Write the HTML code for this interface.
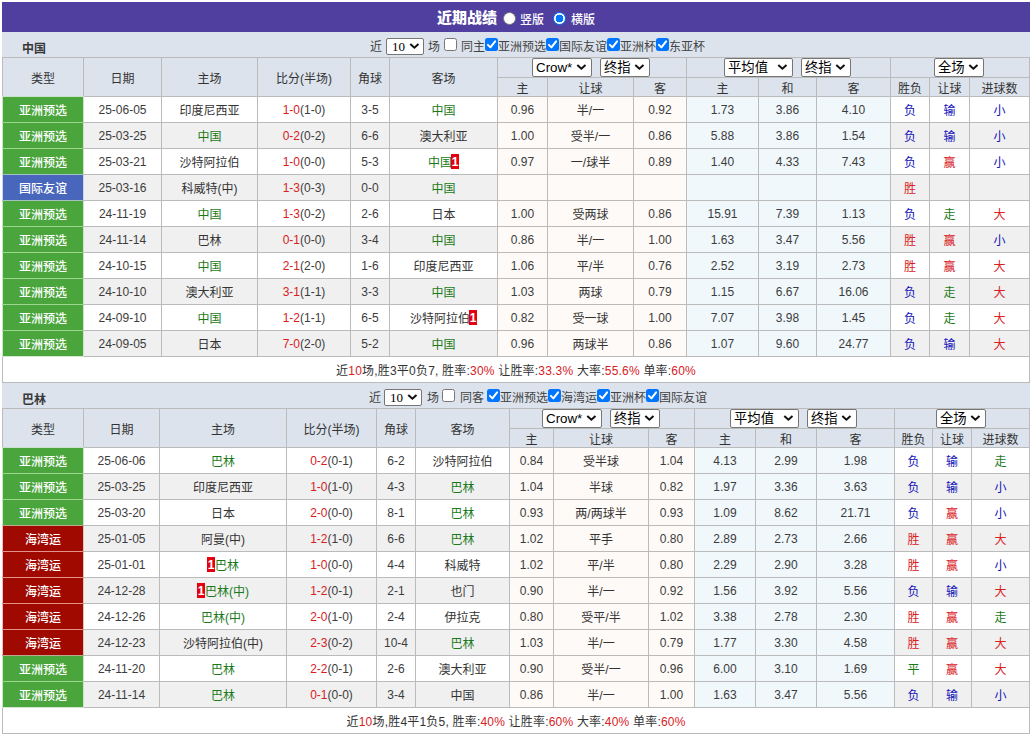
<!DOCTYPE html>
<html lang="zh-CN"><head><meta charset="utf-8"><title>近期战绩</title>
<style>
html,body{margin:0;padding:0;background:#fff;}
body{width:1032px;height:736px;overflow:hidden;font-family:"Liberation Sans","Noto Sans CJK SC",sans-serif;font-size:12px;color:#333;}
.wrap{position:absolute;left:2px;top:2px;width:1028px;}
.hd{position:relative;height:30px;background:#503f9e;color:#fff;}
.hd .ttl{position:absolute;left:435px;top:6px;font:900 15px/20px "Liberation Sans","Noto Sans CJK SC",sans-serif;}
.hd .rd{position:absolute;top:10px;width:13px;height:13px;box-sizing:border-box;border-radius:50%;background:#fff;border:1px solid #767676;}
.hd .rd.on{border:1.5px solid #0075ff;background:radial-gradient(circle at center,#0075ff 0,#0075ff 3.6px,#fff 4.1px);}
.hd .rl{position:absolute;top:10px;font-size:12px;line-height:16px;font-weight:500;}
.bar{position:relative;height:25px;background:#dce3ed;}
.bar .tn{position:absolute;left:20px;top:9px;font-weight:bold;font-size:12px;line-height:16px;color:#383838;}
.ft{position:absolute;margin-top:2px;font:12px/16px "Liberation Sans","Noto Sans CJK SC",sans-serif;color:#444;white-space:nowrap;}
.cb{position:absolute;width:13px;height:13px;box-sizing:border-box;border:1px solid #767676;border-radius:2.5px;background:#fff;}
.cb.on{border:none;background:#0075ff;}
.cb svg{display:block;}
.sel{display:inline-block;position:relative;box-sizing:border-box;height:18px;border:1px solid #767676;border-radius:2px;background:#fff;color:#000;font-size:13.33px;line-height:16px;padding:1px 0 0 3px;text-align:left;vertical-align:top;white-space:nowrap;font-weight:normal;overflow:hidden;}
.sel svg{position:absolute;right:4px;top:4px;display:block;}
.sel.s10{position:absolute;width:38px;height:17px;line-height:14px;font:13px/14px "Liberation Serif",serif;padding:1px 0 0 5px;}
table.t{border-collapse:collapse;table-layout:fixed;width:1027px;margin:0;}
table.t td,table.t th{border:1px solid #bbb;padding:0;text-align:center;font-weight:normal;font-size:12px;overflow:hidden;white-space:nowrap;}
table.t th{background:#dce3ed;color:#333;}
tr.h1{height:20px;} tr.h2{height:19px;}
tr.h1 th{height:19px;line-height:19px;}
tr.h1 th[rowspan]{padding-top:4px;}
tr.h2 th{height:14px;line-height:14px;padding-top:4px;}
tr.a td,tr.b td,tr.sum td{height:21px;line-height:21px;padding-top:4px;}
tr.a td.n,tr.b td.n{height:23px;line-height:23px;padding-top:2px;}
tr.a td{background:#fff;} tr.b td{background:#f0f0f0;}
tr.a td.o,tr.b td.o{background:#fefaf7;}
tr.a td.e,tr.b td.e{background:#f0f8fc;}
tr.sum td{background:#fff;}
table.t td.ty{color:#fff;font-weight:500;border-style:double;}
tr.a td.tg,tr.b td.tg{background:#4aa63c;border-color:#cde5c8;}
tr.a td.tb,tr.b td.tb{background:#4766bc;border-color:#cdd5ea;}
tr.a td.tr,tr.b td.tr{background:#a00900;border-color:#e7c1bf;}
.gt{color:#1a7a1a;}
.cr{color:#d8201e;} .cg{color:#1a7a1a;}
.kb{color:#1010b8;}
.rc{display:inline-block;background:#e6000f;color:#fff;font-size:12px;font-weight:bold;line-height:17px;height:15px;width:8px;text-align:center;vertical-align:1px;margin-left:-1px;}
.rc.rb{margin-left:0;}
tr.sum td{letter-spacing:0.2px;}
th .sel{height:19px;}
tr.h1 th[colspan]{padding-right:2px;}
.sel.s10 svg{right:3px;top:3px;}
tr.a td.n,tr.b td.n{color:#3c3c3c;}

</style></head>
<body>
<div class="wrap">
<div class="hd"><span class="ttl">近期战绩</span><span class="rd" style="left:501px"></span><span class="rl" style="left:518px">竖版</span><span class="rd on" style="left:551px"></span><span class="rl" style="left:569px">横版</span></div>
<div class="bar"><span class="tn">中国</span><span class="ft" style="left:368px;top:5px">近</span><span class="sel s10" style="left:384px;top:6px">10<svg width="12" height="8" viewBox="0 0 12 8"><path d="M2.3 2 L6.4 5.7 L10.5 2" fill="none" stroke="#111" stroke-width="2"/></svg></span><span class="ft" style="left:426px;top:5px">场</span><span class="cb" style="left:442px;top:6px"></span><span class="ft" style="left:459px;top:5px">同主</span><span class="cb on" style="left:483px;top:6px"><svg viewBox="0 0 13 13" width="13" height="13"><path d="M2.9 6.9 L5.4 9.4 L10.1 3.3" fill="none" stroke="#fff" stroke-width="2" stroke-linecap="round" stroke-linejoin="round"/></svg></span><span class="ft" style="left:496px;top:5px">亚洲预选</span><span class="cb on" style="left:544px;top:6px"><svg viewBox="0 0 13 13" width="13" height="13"><path d="M2.9 6.9 L5.4 9.4 L10.1 3.3" fill="none" stroke="#fff" stroke-width="2" stroke-linecap="round" stroke-linejoin="round"/></svg></span><span class="ft" style="left:557px;top:5px">国际友谊</span><span class="cb on" style="left:605px;top:6px"><svg viewBox="0 0 13 13" width="13" height="13"><path d="M2.9 6.9 L5.4 9.4 L10.1 3.3" fill="none" stroke="#fff" stroke-width="2" stroke-linecap="round" stroke-linejoin="round"/></svg></span><span class="ft" style="left:618px;top:5px">亚洲杯</span><span class="cb on" style="left:654px;top:6px"><svg viewBox="0 0 13 13" width="13" height="13"><path d="M2.9 6.9 L5.4 9.4 L10.1 3.3" fill="none" stroke="#fff" stroke-width="2" stroke-linecap="round" stroke-linejoin="round"/></svg></span><span class="ft" style="left:667px;top:5px">东亚杯</span></div>
<table class="t"><col style="width:81px"><col style="width:78px"><col style="width:96px"><col style="width:93px"><col style="width:39px"><col style="width:108px"><col style="width:50px"><col style="width:86px"><col style="width:53px"><col style="width:72px"><col style="width:58px"><col style="width:74px"><col style="width:39px"><col style="width:40px"><col style="width:60px">
<tr class="h1"><th rowspan="2">类型</th><th rowspan="2">日期</th><th rowspan="2">主场</th><th rowspan="2">比分(半场)</th><th rowspan="2">角球</th><th rowspan="2">客场</th><th colspan="3"><span class="sel" style="width:60px">Crow*<svg width="12" height="8" viewBox="0 0 12 8"><path d="M2.3 2 L6.4 5.7 L10.5 2" fill="none" stroke="#111" stroke-width="2"/></svg></span><span class="sel" style="width:50px;margin-left:8px">终指<svg width="12" height="8" viewBox="0 0 12 8"><path d="M2.3 2 L6.4 5.7 L10.5 2" fill="none" stroke="#111" stroke-width="2"/></svg></span></th><th colspan="3"><span class="sel" style="width:69px">平均值<svg width="12" height="8" viewBox="0 0 12 8"><path d="M2.3 2 L6.4 5.7 L10.5 2" fill="none" stroke="#111" stroke-width="2"/></svg></span><span class="sel" style="width:50px;margin-left:8px">终指<svg width="12" height="8" viewBox="0 0 12 8"><path d="M2.3 2 L6.4 5.7 L10.5 2" fill="none" stroke="#111" stroke-width="2"/></svg></span></th><th colspan="3"><span class="sel" style="width:50px">全场<svg width="12" height="8" viewBox="0 0 12 8"><path d="M2.3 2 L6.4 5.7 L10.5 2" fill="none" stroke="#111" stroke-width="2"/></svg></span></th></tr>
<tr class="h2"><th>主</th><th>让球</th><th>客</th><th>主</th><th>和</th><th>客</th><th>胜负</th><th>让球</th><th>进球数</th></tr>
<tr class="a"><td class="ty tg" style="border-top-color:#c9e2ca;border-bottom-color:#9bd58f">亚洲预选</td><td class="n">25-06-05</td><td>印度尼西亚</td><td class="n"><span class="cr">1-0</span>(1-0)</td><td class="n">3-5</td><td class="gt">中国</td><td class="o n">0.96</td><td class="o">半/一</td><td class="o n">0.92</td><td class="e n">1.73</td><td class="e n">3.86</td><td class="e n">4.10</td><td class="rs kb">负</td><td class="rs kb">输</td><td class="rs kb">小</td></tr>
<tr class="b"><td class="ty tg" style="border-top-color:#9bd58f;border-bottom-color:#9bd58f">亚洲预选</td><td class="n">25-03-25</td><td class="gt">中国</td><td class="n"><span class="cr">0-2</span>(0-2)</td><td class="n">6-6</td><td>澳大利亚</td><td class="o n">1.00</td><td class="o">受半/一</td><td class="o n">0.86</td><td class="e n">5.88</td><td class="e n">3.86</td><td class="e n">1.54</td><td class="rs kb">负</td><td class="rs kb">输</td><td class="rs kb">小</td></tr>
<tr class="a"><td class="ty tg" style="border-top-color:#9bd58f;border-bottom-color:#a4c2be">亚洲预选</td><td class="n">25-03-21</td><td>沙特阿拉伯</td><td class="n"><span class="cr">1-0</span>(0-0)</td><td class="n">5-3</td><td class="gt">中国<span class="rc">1</span></td><td class="o n">0.97</td><td class="o">一/球半</td><td class="o n">0.89</td><td class="e n">1.40</td><td class="e n">4.33</td><td class="e n">7.43</td><td class="rs kb">负</td><td class="rs cr">赢</td><td class="rs kb">小</td></tr>
<tr class="b"><td class="ty tb" style="border-top-color:#a4c2be;border-bottom-color:#a4c2be">国际友谊</td><td class="n">25-03-16</td><td>科威特(中)</td><td class="n"><span class="cr">1-3</span>(0-3)</td><td class="n">0-0</td><td class="gt">中国</td><td class="o n"></td><td class="o"></td><td class="o n"></td><td class="e n"></td><td class="e n"></td><td class="e n"></td><td class="rs cr">胜</td><td class="rs"></td><td class="rs"></td></tr>
<tr class="a"><td class="ty tg" style="border-top-color:#a4c2be;border-bottom-color:#9bd58f">亚洲预选</td><td class="n">24-11-19</td><td class="gt">中国</td><td class="n"><span class="cr">1-3</span>(0-2)</td><td class="n">2-6</td><td>日本</td><td class="o n">1.00</td><td class="o">受两球</td><td class="o n">0.86</td><td class="e n">15.91</td><td class="e n">7.39</td><td class="e n">1.13</td><td class="rs kb">负</td><td class="rs cg">走</td><td class="rs cr">大</td></tr>
<tr class="b"><td class="ty tg" style="border-top-color:#9bd58f;border-bottom-color:#9bd58f">亚洲预选</td><td class="n">24-11-14</td><td>巴林</td><td class="n"><span class="cr">0-1</span>(0-0)</td><td class="n">3-4</td><td class="gt">中国</td><td class="o n">0.86</td><td class="o">半/一</td><td class="o n">1.00</td><td class="e n">1.63</td><td class="e n">3.47</td><td class="e n">5.56</td><td class="rs cr">胜</td><td class="rs cr">赢</td><td class="rs kb">小</td></tr>
<tr class="a"><td class="ty tg" style="border-top-color:#9bd58f;border-bottom-color:#9bd58f">亚洲预选</td><td class="n">24-10-15</td><td class="gt">中国</td><td class="n"><span class="cr">2-1</span>(2-0)</td><td class="n">1-6</td><td>印度尼西亚</td><td class="o n">1.06</td><td class="o">平/半</td><td class="o n">0.76</td><td class="e n">2.52</td><td class="e n">3.19</td><td class="e n">2.73</td><td class="rs cr">胜</td><td class="rs cr">赢</td><td class="rs cr">大</td></tr>
<tr class="b"><td class="ty tg" style="border-top-color:#9bd58f;border-bottom-color:#9bd58f">亚洲预选</td><td class="n">24-10-10</td><td>澳大利亚</td><td class="n"><span class="cr">3-1</span>(1-1)</td><td class="n">3-3</td><td class="gt">中国</td><td class="o n">1.03</td><td class="o">两球</td><td class="o n">0.79</td><td class="e n">1.15</td><td class="e n">6.67</td><td class="e n">16.06</td><td class="rs kb">负</td><td class="rs cg">走</td><td class="rs cr">大</td></tr>
<tr class="a"><td class="ty tg" style="border-top-color:#9bd58f;border-bottom-color:#9bd58f">亚洲预选</td><td class="n">24-09-10</td><td class="gt">中国</td><td class="n"><span class="cr">1-2</span>(1-1)</td><td class="n">6-5</td><td>沙特阿拉伯<span class="rc">1</span></td><td class="o n">0.82</td><td class="o">受一球</td><td class="o n">1.00</td><td class="e n">7.07</td><td class="e n">3.98</td><td class="e n">1.45</td><td class="rs kb">负</td><td class="rs cg">走</td><td class="rs cr">大</td></tr>
<tr class="b"><td class="ty tg" style="border-top-color:#9bd58f;border-bottom-color:#d2e9ce">亚洲预选</td><td class="n">24-09-05</td><td>日本</td><td class="n"><span class="cr">7-0</span>(2-0)</td><td class="n">5-2</td><td class="gt">中国</td><td class="o n">0.96</td><td class="o">两球半</td><td class="o n">0.86</td><td class="e n">1.07</td><td class="e n">9.60</td><td class="e n">24.77</td><td class="rs kb">负</td><td class="rs kb">输</td><td class="rs cr">大</td></tr>
<tr class="sum"><td colspan="15">近<span class="cr">10</span>场,胜3平0负7, 胜率:<span class="cr">30%</span> 让胜率:<span class="cr">33.3%</span> 大率:<span class="cr">55.6%</span> 单率:<span class="cr">60%</span></td></tr>
</table>
<div class="bar"><span class="tn">巴林</span><span class="ft" style="left:367px;top:5px">近</span><span class="sel s10" style="left:382px;top:6px">10<svg width="12" height="8" viewBox="0 0 12 8"><path d="M2.3 2 L6.4 5.7 L10.5 2" fill="none" stroke="#111" stroke-width="2"/></svg></span><span class="ft" style="left:425px;top:5px">场</span><span class="cb" style="left:440px;top:6px"></span><span class="ft" style="left:458px;top:5px">同客</span><span class="cb on" style="left:485px;top:6px"><svg viewBox="0 0 13 13" width="13" height="13"><path d="M2.9 6.9 L5.4 9.4 L10.1 3.3" fill="none" stroke="#fff" stroke-width="2" stroke-linecap="round" stroke-linejoin="round"/></svg></span><span class="ft" style="left:498px;top:5px">亚洲预选</span><span class="cb on" style="left:546px;top:6px"><svg viewBox="0 0 13 13" width="13" height="13"><path d="M2.9 6.9 L5.4 9.4 L10.1 3.3" fill="none" stroke="#fff" stroke-width="2" stroke-linecap="round" stroke-linejoin="round"/></svg></span><span class="ft" style="left:559px;top:5px">海湾运</span><span class="cb on" style="left:595px;top:6px"><svg viewBox="0 0 13 13" width="13" height="13"><path d="M2.9 6.9 L5.4 9.4 L10.1 3.3" fill="none" stroke="#fff" stroke-width="2" stroke-linecap="round" stroke-linejoin="round"/></svg></span><span class="ft" style="left:608px;top:5px">亚洲杯</span><span class="cb on" style="left:644px;top:6px"><svg viewBox="0 0 13 13" width="13" height="13"><path d="M2.9 6.9 L5.4 9.4 L10.1 3.3" fill="none" stroke="#fff" stroke-width="2" stroke-linecap="round" stroke-linejoin="round"/></svg></span><span class="ft" style="left:657px;top:5px">国际友谊</span></div>
<table class="t"><col style="width:81px"><col style="width:76px"><col style="width:127px"><col style="width:90px"><col style="width:39px"><col style="width:94px"><col style="width:44px"><col style="width:95px"><col style="width:46px"><col style="width:61px"><col style="width:61px"><col style="width:78px"><col style="width:38px"><col style="width:39px"><col style="width:58px">
<tr class="h1"><th rowspan="2">类型</th><th rowspan="2">日期</th><th rowspan="2">主场</th><th rowspan="2">比分(半场)</th><th rowspan="2">角球</th><th rowspan="2">客场</th><th colspan="3"><span class="sel" style="width:60px">Crow*<svg width="12" height="8" viewBox="0 0 12 8"><path d="M2.3 2 L6.4 5.7 L10.5 2" fill="none" stroke="#111" stroke-width="2"/></svg></span><span class="sel" style="width:50px;margin-left:8px">终指<svg width="12" height="8" viewBox="0 0 12 8"><path d="M2.3 2 L6.4 5.7 L10.5 2" fill="none" stroke="#111" stroke-width="2"/></svg></span></th><th colspan="3"><span class="sel" style="width:69px">平均值<svg width="12" height="8" viewBox="0 0 12 8"><path d="M2.3 2 L6.4 5.7 L10.5 2" fill="none" stroke="#111" stroke-width="2"/></svg></span><span class="sel" style="width:50px;margin-left:8px">终指<svg width="12" height="8" viewBox="0 0 12 8"><path d="M2.3 2 L6.4 5.7 L10.5 2" fill="none" stroke="#111" stroke-width="2"/></svg></span></th><th colspan="3"><span class="sel" style="width:50px">全场<svg width="12" height="8" viewBox="0 0 12 8"><path d="M2.3 2 L6.4 5.7 L10.5 2" fill="none" stroke="#111" stroke-width="2"/></svg></span></th></tr>
<tr class="h2"><th>主</th><th>让球</th><th>客</th><th>主</th><th>和</th><th>客</th><th>胜负</th><th>让球</th><th>进球数</th></tr>
<tr class="a"><td class="ty tg" style="border-top-color:#c9e2ca;border-bottom-color:#9bd58f">亚洲预选</td><td class="n">25-06-06</td><td class="gt">巴林</td><td class="n"><span class="cr">0-2</span>(0-1)</td><td class="n">6-2</td><td>沙特阿拉伯</td><td class="o n">0.84</td><td class="o">受半球</td><td class="o n">1.04</td><td class="e n">4.13</td><td class="e n">2.99</td><td class="e n">1.98</td><td class="rs kb">负</td><td class="rs kb">输</td><td class="rs cg">走</td></tr>
<tr class="b"><td class="ty tg" style="border-top-color:#9bd58f;border-bottom-color:#9bd58f">亚洲预选</td><td class="n">25-03-25</td><td>印度尼西亚</td><td class="n"><span class="cr">1-0</span>(1-0)</td><td class="n">4-3</td><td class="gt">巴林</td><td class="o n">1.04</td><td class="o">半球</td><td class="o n">0.82</td><td class="e n">1.97</td><td class="e n">3.36</td><td class="e n">3.63</td><td class="rs kb">负</td><td class="rs kb">输</td><td class="rs kb">小</td></tr>
<tr class="a"><td class="ty tg" style="border-top-color:#9bd58f;border-bottom-color:#baab8e">亚洲预选</td><td class="n">25-03-20</td><td>日本</td><td class="n"><span class="cr">2-0</span>(0-0)</td><td class="n">8-1</td><td class="gt">巴林</td><td class="o n">0.93</td><td class="o">两/两球半</td><td class="o n">0.93</td><td class="e n">1.09</td><td class="e n">8.62</td><td class="e n">21.71</td><td class="rs kb">负</td><td class="rs cr">赢</td><td class="rs kb">小</td></tr>
<tr class="b"><td class="ty tr" style="border-top-color:#baab8e;border-bottom-color:#e39389">海湾运</td><td class="n">25-01-05</td><td>阿曼(中)</td><td class="n"><span class="cr">1-2</span>(1-0)</td><td class="n">6-6</td><td class="gt">巴林</td><td class="o n">1.02</td><td class="o">平手</td><td class="o n">0.80</td><td class="e n">2.89</td><td class="e n">2.73</td><td class="e n">2.66</td><td class="rs cr">胜</td><td class="rs cr">赢</td><td class="rs cr">大</td></tr>
<tr class="a"><td class="ty tr" style="border-top-color:#e39389;border-bottom-color:#e39389">海湾运</td><td class="n">25-01-01</td><td class="gt"><span class="rc rb">1</span>巴林</td><td class="n"><span class="cr">1-0</span>(0-0)</td><td class="n">4-4</td><td>科威特</td><td class="o n">1.02</td><td class="o">平/半</td><td class="o n">0.80</td><td class="e n">2.29</td><td class="e n">2.90</td><td class="e n">3.28</td><td class="rs cr">胜</td><td class="rs cr">赢</td><td class="rs kb">小</td></tr>
<tr class="b"><td class="ty tr" style="border-top-color:#e39389;border-bottom-color:#e39389">海湾运</td><td class="n">24-12-28</td><td class="gt"><span class="rc rb">1</span>巴林(中)</td><td class="n"><span class="cr">1-2</span>(0-1)</td><td class="n">2-1</td><td>也门</td><td class="o n">0.90</td><td class="o">半/一</td><td class="o n">0.92</td><td class="e n">1.56</td><td class="e n">3.92</td><td class="e n">5.56</td><td class="rs kb">负</td><td class="rs kb">输</td><td class="rs cr">大</td></tr>
<tr class="a"><td class="ty tr" style="border-top-color:#e39389;border-bottom-color:#e39389">海湾运</td><td class="n">24-12-26</td><td class="gt">巴林(中)</td><td class="n"><span class="cr">2-0</span>(1-0)</td><td class="n">2-4</td><td>伊拉克</td><td class="o n">0.80</td><td class="o">受平/半</td><td class="o n">1.02</td><td class="e n">3.38</td><td class="e n">2.78</td><td class="e n">2.30</td><td class="rs cr">胜</td><td class="rs cr">赢</td><td class="rs cg">走</td></tr>
<tr class="b"><td class="ty tr" style="border-top-color:#e39389;border-bottom-color:#baab8e">海湾运</td><td class="n">24-12-23</td><td>沙特阿拉伯(中)</td><td class="n"><span class="cr">2-3</span>(0-2)</td><td class="n">10-4</td><td class="gt">巴林</td><td class="o n">1.03</td><td class="o">半/一</td><td class="o n">0.79</td><td class="e n">1.77</td><td class="e n">3.30</td><td class="e n">4.58</td><td class="rs cr">胜</td><td class="rs cr">赢</td><td class="rs cr">大</td></tr>
<tr class="a"><td class="ty tg" style="border-top-color:#baab8e;border-bottom-color:#9bd58f">亚洲预选</td><td class="n">24-11-20</td><td class="gt">巴林</td><td class="n"><span class="cr">2-2</span>(0-1)</td><td class="n">2-6</td><td>澳大利亚</td><td class="o n">0.90</td><td class="o">受半/一</td><td class="o n">0.96</td><td class="e n">6.00</td><td class="e n">3.10</td><td class="e n">1.69</td><td class="rs cg">平</td><td class="rs cr">赢</td><td class="rs cr">大</td></tr>
<tr class="b"><td class="ty tg" style="border-top-color:#9bd58f;border-bottom-color:#d2e9ce">亚洲预选</td><td class="n">24-11-14</td><td class="gt">巴林</td><td class="n"><span class="cr">0-1</span>(0-0)</td><td class="n">3-4</td><td>中国</td><td class="o n">0.86</td><td class="o">半/一</td><td class="o n">1.00</td><td class="e n">1.63</td><td class="e n">3.47</td><td class="e n">5.56</td><td class="rs kb">负</td><td class="rs kb">输</td><td class="rs kb">小</td></tr>
<tr class="sum"><td colspan="15">近<span class="cr">10</span>场,胜4平1负5, 胜率:<span class="cr">40%</span> 让胜率:<span class="cr">60%</span> 大率:<span class="cr">40%</span> 单率:<span class="cr">60%</span></td></tr>
</table>
</div></body></html>
